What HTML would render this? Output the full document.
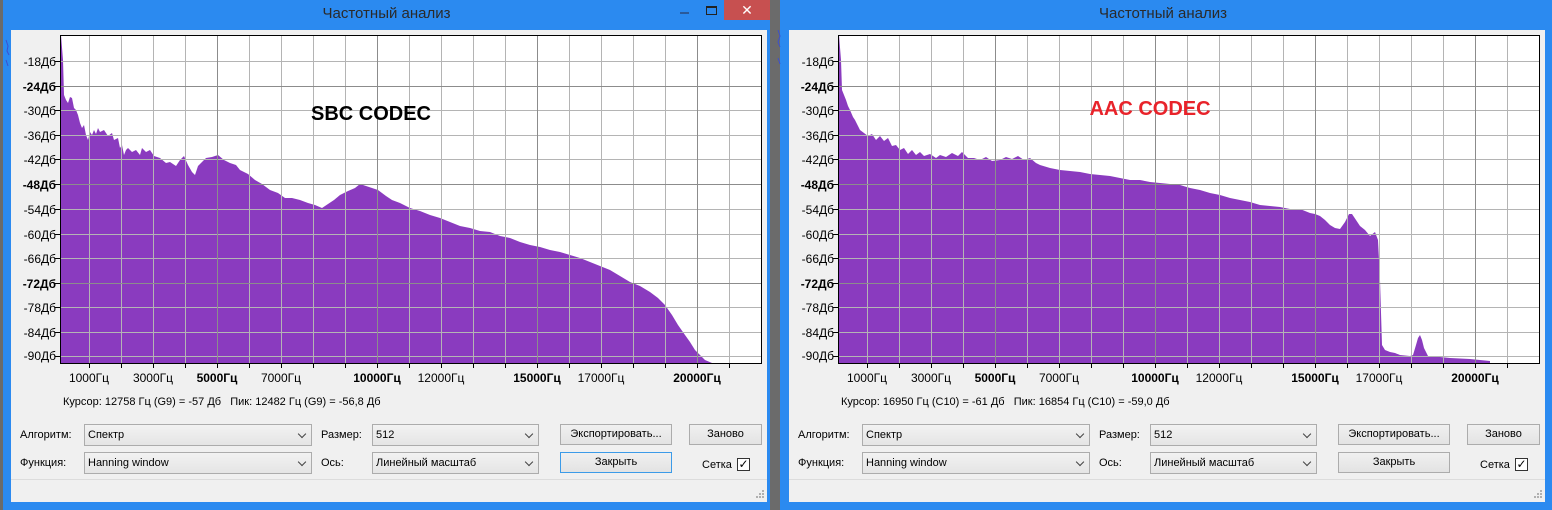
<!DOCTYPE html>
<html><head><meta charset="utf-8"><style>
*{margin:0;padding:0;box-sizing:border-box}
body{width:1552px;height:510px;overflow:hidden;background:#6b6b6b;position:relative;font-family:"Liberation Sans","DejaVu Sans",sans-serif;font-size:11px;color:#000}
.win{position:absolute;top:0;height:510px;background:#2b8af0}
.title{position:absolute;top:5px;left:0;width:767px;text-align:center;font-size:15px;color:#2a2a2a}
.a{position:absolute;white-space:nowrap}
.combo{position:absolute;height:22px;border:1px solid #acacac;background:linear-gradient(#f2f2f2,#e5e5e5);padding:4px 3px;font-size:11px}
.combo:after{content:"";position:absolute;right:6px;top:6px;width:5px;height:5px;border-right:1.5px solid #444;border-bottom:1.5px solid #444;transform:rotate(45deg)}
.btn{position:absolute;height:21px;border:1px solid #acacac;background:linear-gradient(#f0f0f0,#e3e3e3);text-align:center;line-height:19px;font-size:11px}
.chk{position:absolute;width:13px;height:13px;border:1px solid #333;background:#fff;font-size:12px;line-height:11px;text-align:center;font-weight:bold}
</style></head><body>
<svg width="0" height="0" style="position:absolute">
<defs>
<g id="grid" stroke="#b4b4b4" stroke-width="1" fill="none">
<path d="M89.5 35V363M121.5 35V363M153.5 35V363M185.5 35V363M249.5 35V363M281.5 35V363M313.5 35V363M345.5 35V363M409.5 35V363M441.5 35V363M473.5 35V363M505.5 35V363M569.5 35V363M601.5 35V363M633.5 35V363M665.5 35V363M729.5 35V363"/>
<path d="M60 61.5H762M60 110.5H762M60 135.5H762M60 159.5H762M60 209.5H762M60 234.5H762M60 258.5H762M60 307.5H762M60 332.5H762M60 356.5H762"/>
<path stroke="#8c8c8c" d="M217.5 35V363M377.5 35V363M537.5 35V363M697.5 35V363M60 86.5H762M60 184.5H762M60 283.5H762"/>
</g>
<g id="axes">
<rect x="60.5" y="35.5" width="701" height="328" fill="none" stroke="#000"/>
<path stroke="#000" d="M55 61.5h5M55 86.5h5M55 110.5h5M55 135.5h5M55 159.5h5M55 184.5h5M55 209.5h5M55 234.5h5M55 258.5h5M55 283.5h5M55 307.5h5M55 332.5h5M55 356.5h5M60 363.5h702M89.5 363v5M121.5 363v5M153.5 363v5M185.5 363v5M217.5 363v5M249.5 363v5M281.5 363v5M313.5 363v5M345.5 363v5M377.5 363v5M409.5 363v5M441.5 363v5M473.5 363v5M505.5 363v5M537.5 363v5M569.5 363v5M601.5 363v5M633.5 363v5M665.5 363v5M697.5 363v5M729.5 363v5"/>
<g font-family="Liberation Sans,sans-serif" font-size="12" text-anchor="end" fill="#000">
<text x="56" y="66">-18Дб</text><text x="56" y="91" font-weight="bold">-24Дб</text><text x="56" y="115">-30Дб</text><text x="56" y="140">-36Дб</text><text x="56" y="164">-42Дб</text><text x="56" y="189" font-weight="bold">-48Дб</text><text x="56" y="214">-54Дб</text><text x="56" y="239">-60Дб</text><text x="56" y="263">-66Дб</text><text x="56" y="288" font-weight="bold">-72Дб</text><text x="56" y="312">-78Дб</text><text x="56" y="337">-84Дб</text><text x="56" y="360">-90Дб</text>
</g>
<g font-family="Liberation Sans,sans-serif" font-size="12" text-anchor="middle" fill="#000">
<text x="89" y="382">1000Гц</text><text x="153" y="382">3000Гц</text><text x="217" y="382" font-weight="bold">5000Гц</text><text x="281" y="382">7000Гц</text><text x="377" y="382" font-weight="bold">10000Гц</text><text x="441" y="382">12000Гц</text><text x="537" y="382" font-weight="bold">15000Гц</text><text x="601" y="382">17000Гц</text><text x="697" y="382" font-weight="bold">20000Гц</text>
</g>
</g>
</defs></svg>

<div class="win" style="left:3px;width:767px">
<div class="title">Частотный анализ</div>
<div class="a" style="left:677px;top:12px;width:9px;height:2px;background:#2a5a9a"></div>
<div class="a" style="left:703px;top:6px;width:11px;height:9px;border:1px solid #222;border-top-width:2px"></div>
<div class="a" style="left:721px;top:0;width:46px;height:20px;background:#c75050;color:#fff;text-align:center;font-size:14px;line-height:20px;font-weight:bold">✕</div>
</div>
<div class="win" style="left:780px;width:772px">
<div class="title" style="width:772px;left:-3px">Частотный анализ</div>
</div>

<div class="a" style="left:11px;top:30px;width:756px;height:472px;background:#f0f0f0"></div>
<div class="a" style="left:789px;top:30px;width:756px;height:472px;background:#f0f0f0"></div>
<div class="a" style="left:1545px;top:30px;width:7px;height:480px;background:#2b8af0"></div>

<svg class="a" style="left:0;top:0" width="1552" height="510">
<rect x="60" y="35" width="702" height="328" fill="#fff"/>
<rect x="838" y="35" width="702" height="328" fill="#fff"/>
<polygon fill="#8a3bbf" points="61,35 63,60 64,95 66,100 68,103 70,97 72,98 74,108 76,110 78,115 80,123 82,128 84,125 86,135 88,140 90,132 92,135 94,130 96,134 98,128 100,132 104,130 108,136 112,133 114,140 118,138 120,148 122,145 124,155 126,150 128,148 132,152 136,150 140,155 142,148 146,152 150,150 154,156 160,158 166,163 170,162 176,166 180,160 184,156 188,165 192,172 195,175 198,166 202,162 206,158 212,157 218,155 224,160 230,163 236,165 240,170 248,174 255,180 262,184 270,190 278,193 285,198 292,198 300,200 308,203 315,205 322,208 328,204 334,200 340,195 348,191 355,188 360,184 366,186 372,188 378,190 386,196 392,200 400,203 410,208 420,211 430,215 440,218 450,222 460,226 470,228 480,231 490,232 500,236 510,238 520,242 530,245 540,247 550,250 560,252 570,255 580,258 590,262 600,266 610,270 620,276 630,282 640,286 650,292 658,298 665,305 672,315 678,325 685,335 690,342 695,350 700,355 705,360 712,363 61,363"/>
<polygon fill="#8a3bbf" points="839,35 841,60 842,90 844,95 846,100 848,106 850,110 853,117 855,120 858,126 860,130 864,133 868,136 872,134 876,140 880,136 884,141 888,138 892,146 896,145 900,150 904,148 908,154 912,150 916,155 920,152 924,156 930,154 936,158 940,155 946,157 952,153 958,156 962,152 968,158 974,158 980,160 986,157 992,161 1000,160 1006,157 1012,159 1018,156 1024,160 1030,158 1036,163 1040,165 1050,168 1060,170 1070,171 1080,172 1090,174 1100,175 1110,176 1120,178 1130,180 1140,180 1150,182 1160,183 1170,184 1180,185 1190,188 1200,190 1210,193 1220,195 1230,198 1240,200 1250,202 1260,205 1270,206 1280,207 1290,209 1300,209 1305,211 1310,213 1315,214 1320,216 1325,220 1330,225 1335,228 1340,229 1345,222 1349,214 1352,214 1356,220 1360,226 1365,230 1370,236 1375,232 1378,240 1380,280 1382,345 1385,350 1390,352 1395,353 1400,355 1410,356 1413,355 1416,345 1418,338 1420,335 1422,340 1424,348 1428,356 1440,357 1450,358 1470,359 1490,361 1490,363 839,363"/>
<use href="#grid"/><use href="#axes"/>
<use href="#grid" transform="translate(778 0)"/><use href="#axes" transform="translate(778 0)"/>
<text x="371" y="120" text-anchor="middle" font-family="Liberation Sans,sans-serif" font-weight="bold" font-size="20" fill="#000">SBC CODEC</text>
<text x="1150" y="115" text-anchor="middle" font-family="Liberation Sans,sans-serif" font-weight="bold" font-size="20" fill="#e8232a">AAC CODEC</text>
<path d="M6 40 l2 6 l-1 5 l2 4 M6 60 l2 6" stroke="#3b4fd0" fill="none"/>
<path d="M778 30 l2 6 l-2 6 l2 5 M778 58 l2 6" stroke="#3b4fd0" fill="none"/>
<g fill="#b0b0b0"><rect x="762" y="490" width="2" height="2"/><rect x="759" y="493" width="2" height="2"/><rect x="762" y="493" width="2" height="2"/><rect x="756" y="496" width="2" height="2"/><rect x="759" y="496" width="2" height="2"/><rect x="762" y="496" width="2" height="2"/>
<rect x="1540" y="490" width="2" height="2"/><rect x="1537" y="493" width="2" height="2"/><rect x="1540" y="493" width="2" height="2"/><rect x="1534" y="496" width="2" height="2"/><rect x="1537" y="496" width="2" height="2"/><rect x="1540" y="496" width="2" height="2"/></g>
</svg>

<div class="a" style="left:63px;top:396px">Курсор: 12758 Гц (G9) = -57 Дб &nbsp;&nbsp;Пик: 12482 Гц (G9) = -56,8 Дб</div>
<div class="a" style="left:20px;top:429px">Алгоритм:</div>
<div class="combo" style="left:84px;top:424px;width:228px">Спектр</div>
<div class="a" style="left:321px;top:429px">Размер:</div>
<div class="combo" style="left:372px;top:424px;width:167px">512</div>
<div class="btn" style="left:560px;top:424px;width:112px">Экспортировать...</div>
<div class="btn" style="left:689px;top:424px;width:73px">Заново</div>
<div class="a" style="left:20px;top:457px">Функция:</div>
<div class="combo" style="left:84px;top:452px;width:228px">Hanning window</div>
<div class="a" style="left:321px;top:457px">Ось:</div>
<div class="combo" style="left:372px;top:452px;width:167px">Линейный масштаб</div>
<div class="btn" style="left:560px;top:452px;width:112px;border-color:#3c9be8">Закрыть</div>
<div class="a" style="left:702px;top:459px">Сетка</div>
<div class="chk" style="left:737px;top:458px">✓</div>
<div class="a" style="left:11px;top:479px;width:756px;height:1px;background:#dcdcdc"></div>

<div class="a" style="left:841px;top:396px">Курсор: 16950 Гц (C10) = -61 Дб &nbsp;&nbsp;Пик: 16854 Гц (C10) = -59,0 Дб</div>
<div class="a" style="left:798px;top:429px">Алгоритм:</div>
<div class="combo" style="left:862px;top:424px;width:228px">Спектр</div>
<div class="a" style="left:1099px;top:429px">Размер:</div>
<div class="combo" style="left:1150px;top:424px;width:167px">512</div>
<div class="btn" style="left:1338px;top:424px;width:112px">Экспортировать...</div>
<div class="btn" style="left:1467px;top:424px;width:73px">Заново</div>
<div class="a" style="left:798px;top:457px">Функция:</div>
<div class="combo" style="left:862px;top:452px;width:228px">Hanning window</div>
<div class="a" style="left:1099px;top:457px">Ось:</div>
<div class="combo" style="left:1150px;top:452px;width:167px">Линейный масштаб</div>
<div class="btn" style="left:1338px;top:452px;width:112px">Закрыть</div>
<div class="a" style="left:1480px;top:459px">Сетка</div>
<div class="chk" style="left:1515px;top:458px">✓</div>
<div class="a" style="left:789px;top:479px;width:756px;height:1px;background:#dcdcdc"></div>
</body></html>
